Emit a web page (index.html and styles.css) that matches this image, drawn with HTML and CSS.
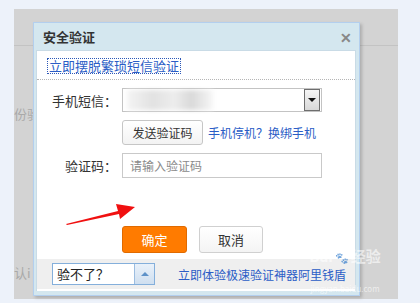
FILE: index.html
```html
<!DOCTYPE html>
<html lang="zh-CN">
<head>
  <meta charset="UTF-8">
  <title>安全验证</title>
  <link rel="stylesheet" href="styles.css">
</head>
<body>
  <div class="page">
    <div class="mask">
      <div class="mask-line"></div>
      <div class="under under-1">份验</div>
      <div class="under under-2">认i</div>
    </div>

    <div class="dialog">
      <div class="dialog-title">
        <span>安全验证</span>
        <span class="close">✕</span>
      </div>
      <div class="dialog-body">
        <div class="top-link">
          <a href="#" class="dotted-link">立即摆脱繁琐短信验证</a>
        </div>
        <div class="form">
          <div class="row">
            <label class="label">手机短信：</label>
            <div class="select">
              <span class="blur"></span>
              <span class="drop"><i class="tri-down"></i></span>
            </div>
          </div>
          <div class="row">
            <span class="label"></span>
            <button class="btn-send">发送验证码</button>
            <a href="#" class="link">手机停机？换绑手机</a>
          </div>
          <div class="row">
            <label class="label">验证码：</label>
            <input class="code-input" type="text" placeholder="请输入验证码">
          </div>
        </div>
        <div class="actions">
          <button class="btn-ok">确定</button>
          <button class="btn-cancel">取消</button>
        </div>
        <div class="footer">
          <div class="help-select">
            <span class="help-text">验不了？</span>
            <span class="help-btn"><i class="tri-up"></i></span>
          </div>
          <a href="#" class="link footer-link">立即体验极速验证神器阿里钱盾</a>
        </div>
      </div>
    </div>

    <svg class="arrow" width="420" height="303" viewBox="0 0 420 303">
      <polygon points="66,224 118,211 116,204 135,207 120,219 119,214 67,225" fill="#f01010"/>
    </svg>

    <div class="watermark">
      <div class="wm-big">Bai<span class="paw">🐾</span>经验</div>
      <div class="wm-small">jingyan.baidu.com</div>
    </div>
  </div>
</body>
</html>
```

FILE: styles.css
```css
body {
  margin: 0;
  background: #edf2fa;
  font-family: "Noto Sans CJK SC", "Noto Sans", sans-serif;
  font-size: 12px;
  color: #333;
}
.page {
  position: relative;
  width: 420px;
  height: 303px;
  overflow: hidden;
}
.mask {
  position: relative;
  margin: 9px 0 0 14px;
  width: 384px;
  height: 290px;
  background: #d3d3d3;
}
.mask-line {
  height: 36px;
  border-bottom: 1px solid #c3c3c3;
}
.under {
  position: absolute;
  left: 0;
  color: #a9a9a9;
  font-size: 13px;
}
.under-1 { top: 95px; }
.under-2 { top: 254px; }

/* ダイアログ */
.dialog {
  position: absolute;
  left: 33px;
  top: 22px;
  width: 320px;
  border: 1px solid #b3cfee;
  background: #d4e7ef;
  padding: 0 3px 4px 2px;
  box-shadow: 2px 2px 3px rgba(0, 0, 0, 0.18);
}
.dialog-title {
  display: flex;
  justify-content: space-between;
  align-items: center;
  height: 27px;
  padding: 0 4px 0 7px;
  font-size: 13px;
  font-weight: bold;
  color: #333;
}
.close {
  color: #888;
  font-size: 14px;
  font-weight: bold;
}
.dialog-body {
  background: #fff;
  border: 1px solid #c9dbe6;
  border-bottom: none;
  padding-bottom: 2px;
}
.top-link {
  padding: 6px 0 5px 10px;
  border-bottom: 1px dotted #b5b5b5;
}
.dotted-link {
  display: inline-block;
  border: 1px dotted #2c58b8;
  color: #2b5dc6;
  font-size: 13px;
  line-height: 14px;
  text-decoration: none;
  padding: 0 1px;
}
.form {
  display: flex;
  flex-direction: column;
  gap: 8px;
  padding-top: 8px;
}
.row {
  display: flex;
  align-items: center;
  gap: 5px;
}
.label {
  width: 80px;
  text-align: right;
  font-size: 13px;
  color: #333;
}
.select {
  position: relative;
  width: 198px;
  height: 22px;
  border: 1px solid #c3c3c3;
  display: flex;
  justify-content: flex-end;
}
.blur {
  position: absolute;
  left: 4px;
  top: 1px;
  width: 86px;
  height: 20px;
  background: linear-gradient(90deg, #f4f4f4, #e2e2e2 30%, #ededed 55%, #d9d9d9 75%, #f7f7f7);
  filter: blur(2px);
}
.drop {
  width: 14px;
  height: 20px;
  margin: 0 1px;
  border: 1px solid #6e6e6e;
  background: linear-gradient(#f5f5f5, #d8d8d8);
  display: flex;
  align-items: center;
  justify-content: center;
}
.tri-down {
  border-left: 4px solid transparent;
  border-right: 4px solid transparent;
  border-top: 4px solid #111;
}
.btn-send {
  width: 81px;
  height: 25px;
  padding: 0;
  border: 1px solid #c6c6c6;
  border-radius: 3px;
  background: linear-gradient(#fff, #f3f3f3);
  font-family: inherit;
  font-size: 12px;
  color: #333;
}
.link {
  color: #2b5dc6;
  text-decoration: none;
  font-size: 12px;
}
.code-input {
  box-sizing: border-box;
  width: 200px;
  height: 25px;
  border: 1px solid #c9c9c9;
  padding: 0 7px;
  font-family: inherit;
  font-size: 12px;
}
.code-input::placeholder {
  color: #8a8a8a;
}
.actions {
  display: flex;
  gap: 12px;
  padding: 48px 0 6px 85px;
}
.btn-ok, .btn-cancel {
  height: 27px;
  padding: 0;
  border-radius: 3px;
  font-family: inherit;
  font-size: 13px;
}
.btn-ok {
  width: 65px;
  border: 1px solid #e06a00;
  background: #ff7b00;
  color: #fff;
}
.btn-cancel {
  width: 64px;
  border: 1px solid #d0d0d0;
  background: linear-gradient(#fff, #f4f4f4);
  color: #333;
}
.footer {
  display: flex;
  align-items: center;
  gap: 23px;
  height: 30px;
  padding-left: 15px;
  background: #efefef;
}
.help-select {
  display: flex;
  width: 101px;
  height: 20px;
  border: 1px solid #84afdb;
  background: #fff;
}
.help-text {
  flex: 1;
  padding-left: 4px;
  font-size: 13px;
  line-height: 20px;
  color: #222;
}
.help-btn {
  width: 19px;
  border-left: 1px solid #9cbde0;
  background: linear-gradient(#e9f1fa, #cfdff0);
  display: flex;
  align-items: center;
  justify-content: center;
}
.tri-up {
  border-left: 4px solid transparent;
  border-right: 4px solid transparent;
  border-bottom: 4px solid #5d91c8;
}
.footer-link {
  font-size: 12px;
}
.arrow {
  position: absolute;
  left: 0;
  top: 0;
}
.watermark {
  position: absolute;
  left: 300px;
  top: 247px;
  width: 90px;
  height: 46px;
  display: flex;
  flex-direction: column;
  justify-content: space-between;
  align-items: center;
  color: rgba(255, 255, 255, 0.6);
  pointer-events: none;
}
.wm-big {
  font-size: 15px;
  font-weight: bold;
  line-height: 17px;
}
.paw {
  font-size: 11px;
  margin: 0 2px;
}
.wm-small {
  font-size: 8px;
  line-height: 9px;
}
```
